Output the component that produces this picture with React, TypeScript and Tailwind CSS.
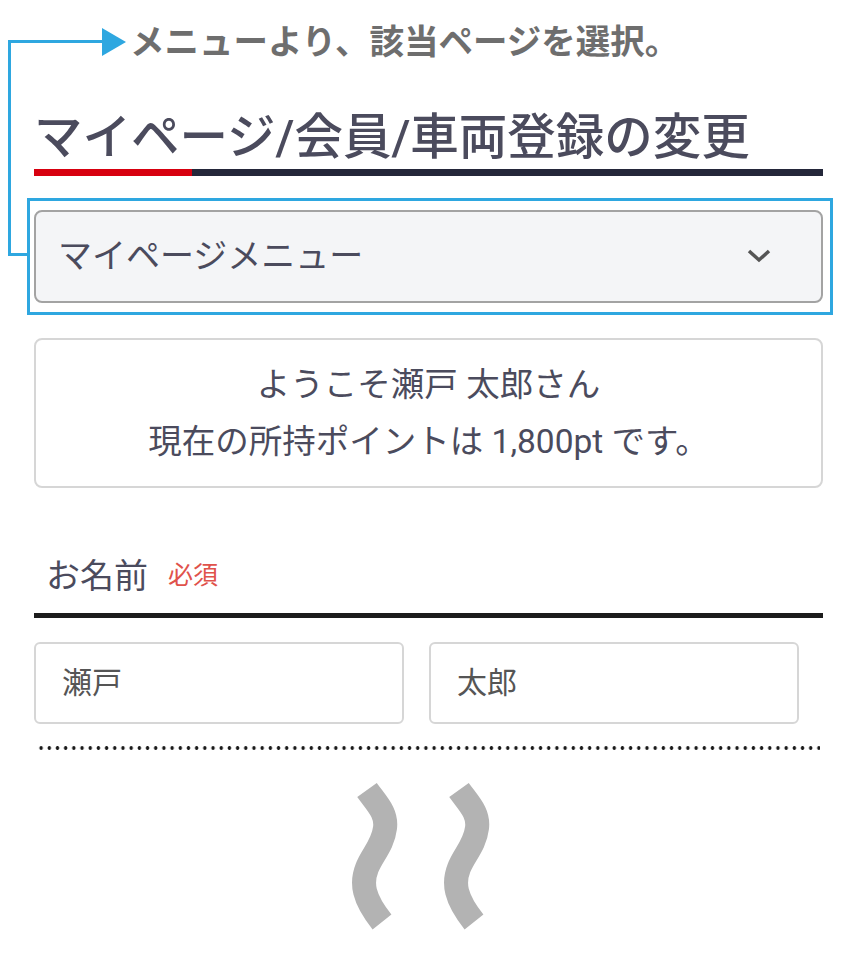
import React from "react";

const jp = "font-['Roboto','Noto_Sans_CJK_JP',sans-serif]";

// Gray wavy "omitted" mark
const Wave = () => (
  <svg width="50" height="150" viewBox="0 0 50 150" fill="none">
    <path
      d="M17 7 C27 21 37 30 35 45 C33 62 22 72 17 85 C11 100 13 115 32 139"
      stroke="#b3b3b3"
      strokeWidth="24"
      strokeLinecap="butt"
    />
  </svg>
);

const App = () => {
  return (
    <div className={`relative w-[852px] h-[958px] bg-white overflow-hidden ${jp}`}>
      {/* annotation connector */}
      <div className="absolute left-[8px] top-[40px] w-[3px] h-[216px] bg-[#2ea7e0]" />
      <div className="absolute left-[8px] top-[40px] w-[96px] h-[3px] bg-[#2ea7e0]" />
      <div className="absolute left-[8px] top-[253px] w-[20px] h-[3px] bg-[#2ea7e0]" />

      <div className="flex flex-col pl-[34px] pr-[29px]">
        <div className="mt-[24px] h-[36px] flex items-center pl-[68px]">
          <svg width="24" height="28" viewBox="0 0 24 28">
            <polygon points="0,0 24,14 0,28" fill="#2ea7e0" />
          </svg>
          <span className="ml-[4px] text-[34.5px] leading-none font-bold text-[#6e6e6e]">
            メニューより、該当ページを選択。
          </span>
        </div>

        <h1 className="mt-[54px] text-[48.5px] leading-none text-[#4b4b5d] font-medium whitespace-nowrap">
          マイページ/会員/車両登録の変更
        </h1>
        <div className="mt-[6px] h-[7px] flex">
          <div className="w-[158px] bg-[#d7000f]" />
          <div className="flex-1 bg-[#24273a]" />
        </div>

        <div className="mt-[22px] -ml-[7px] w-[806px] border-[3px] border-[#2ea7e0] pt-[9px] pb-[9px] pl-[4px]">
          <div className="w-[789px] h-[93px] rounded-[8px] border-2 border-[#a3a3a3] bg-[#f4f5f7] flex items-center justify-between pl-[22px] pr-[50px]">
            <span className="text-[34px] leading-none text-[#4b4b5d]">マイページメニュー</span>
            <svg width="24" height="14" viewBox="0 0 24 14" fill="none">
              <path d="M2 2 L12 11 L22 2" stroke="#555" strokeWidth="3.5" />
            </svg>
          </div>
        </div>

        <div className="mt-[23px] h-[150px] rounded-[8px] border-2 border-[#d6d6d6] flex flex-col items-center justify-center text-[33.5px] leading-[57px] text-[#4b4b5d]">
          <p>ようこそ瀬戸 太郎さん</p>
          <p>現在の所持ポイントは 1,800pt です。</p>
        </div>

        <div className="mt-[72px] flex items-center pl-[12px] h-[32px]">
          <span className="text-[34px] leading-none text-[#4b4b5d]">お名前</span>
          <span className="ml-[20px] text-[25px] leading-none text-[#e0524b]">必須</span>
        </div>
        <div className="mt-[21px] h-[5px] bg-[#1c1c1c]" />

        <div className="mt-[24px] flex gap-[25px]">
          <div className="w-[370px] h-[82px] rounded-[6px] border-2 border-[#d6d6d6] flex items-center pl-[26px] text-[30px] text-[#555]">
            瀬戸
          </div>
          <div className="w-[370px] h-[82px] rounded-[6px] border-2 border-[#d6d6d6] flex items-center pl-[26px] text-[30px] text-[#555]">
            太郎
          </div>
        </div>

        <div className="mt-[22px] ml-[3px] mr-[3px] h-[4px] bg-[radial-gradient(circle,#1a1a1a_1.6px,transparent_2px)] bg-[length:8.2px_4px] bg-repeat-x" />

        <div className="mt-[33px] flex justify-center gap-[42px] pr-[15px]">
          <Wave />
          <Wave />
        </div>
      </div>
    </div>
  );
};

export default App;
